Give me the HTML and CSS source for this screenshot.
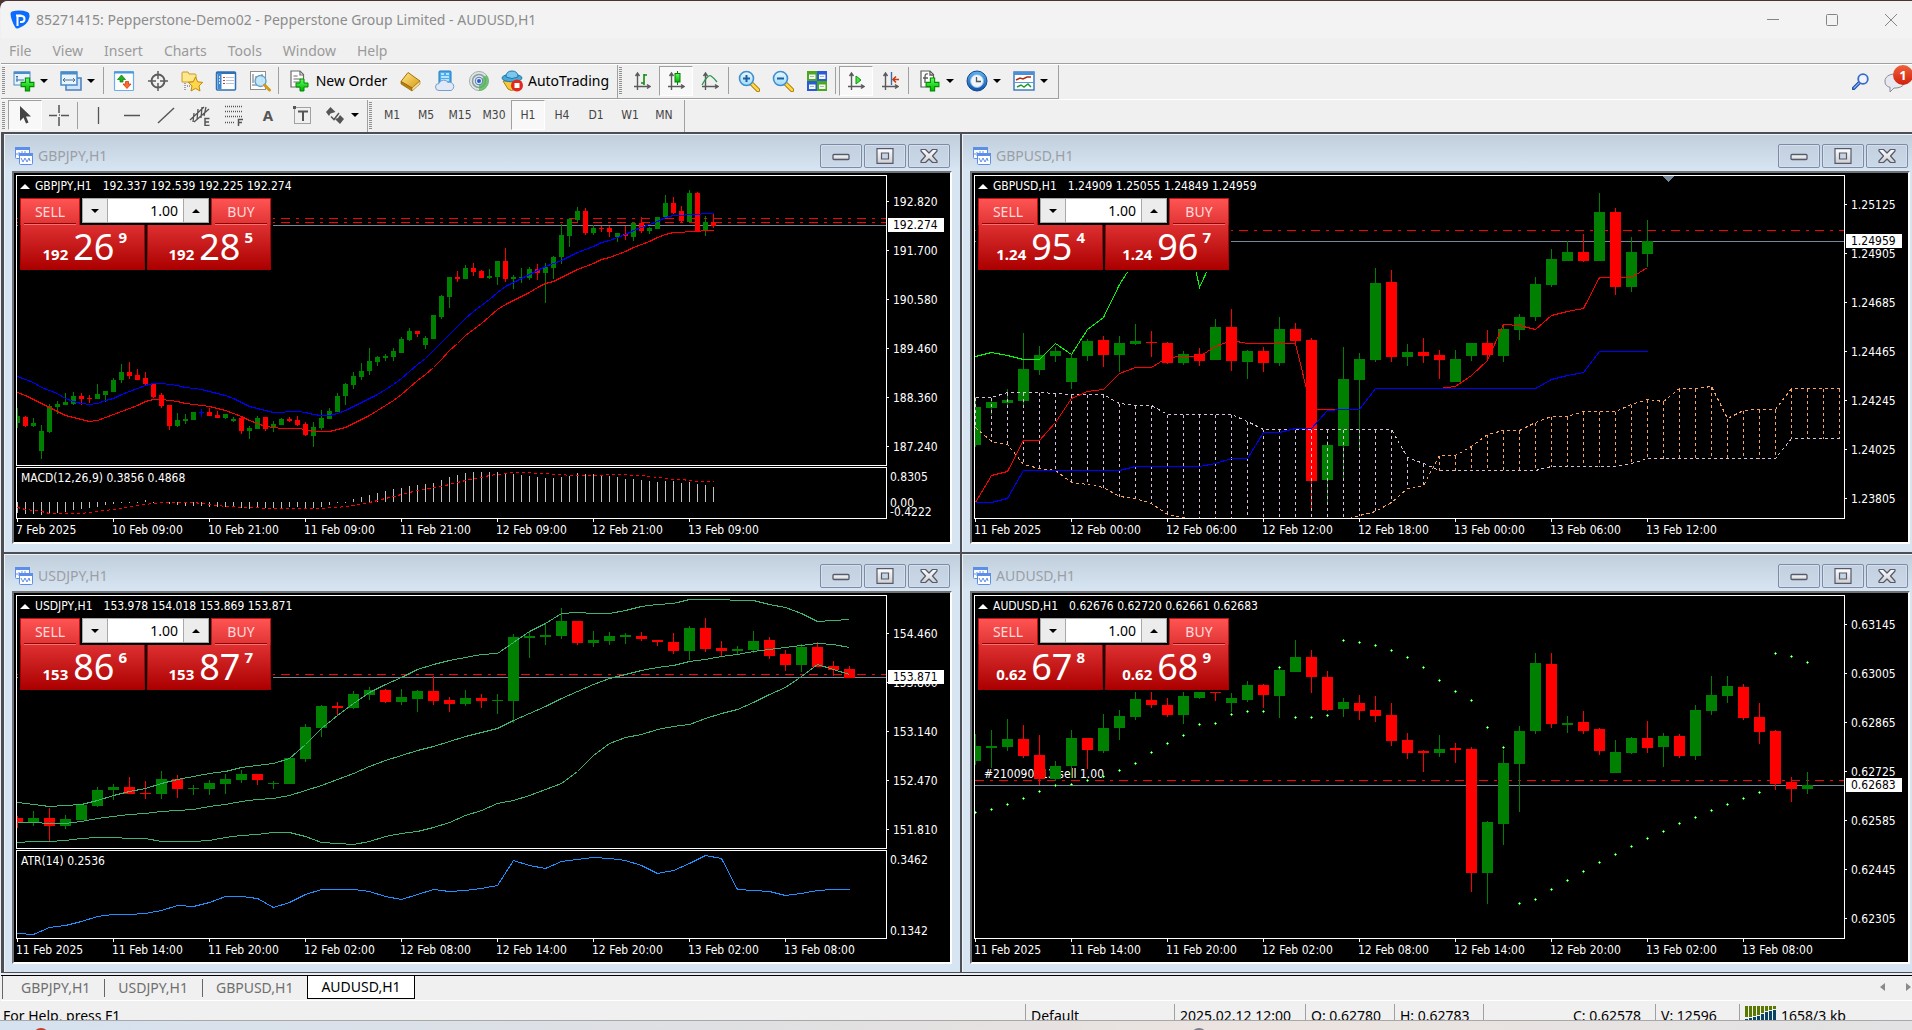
FILE: index.html
```html
<!DOCTYPE html>
<html lang="en">
<head>
<meta charset="utf-8">
<title>85271415: Pepperstone-Demo02 - Pepperstone Group Limited - AUDUSD,H1</title>
<link rel="stylesheet" href="styles.css">
</head>
<body>
<svg class="defs" width="0" height="0" aria-hidden="true">
  <defs>
    <linearGradient id="g-green" x1="0" y1="0" x2="0" y2="1"><stop offset="0" stop-color="#5dff5d"/><stop offset="1" stop-color="#00b400"/></linearGradient>
    <linearGradient id="g-gold" x1="0" y1="0" x2="1" y2="1"><stop offset="0" stop-color="#ffe98a"/><stop offset="1" stop-color="#d79a12"/></linearGradient>
    <linearGradient id="g-blue" x1="0" y1="0" x2="0" y2="1"><stop offset="0" stop-color="#5fb4f0"/><stop offset="1" stop-color="#0f4fa8"/></linearGradient>
    <linearGradient id="g-lens" x1="0" y1="0" x2="0" y2="1"><stop offset="0" stop-color="#eaf8ff"/><stop offset="1" stop-color="#9fdcf7"/></linearGradient>
    <linearGradient id="g-glyph" x1="0" y1="0" x2="0" y2="1"><stop offset="0" stop-color="#ffffff"/><stop offset="1" stop-color="#cfcfcf"/></linearGradient>
    <symbol id="chartwin" viewBox="0 0 18 18">
      <rect x="0.5" y="0.5" width="14" height="11" rx="1" fill="#fff" stroke="#5d8fe8"/><rect x="0" y="0" width="15" height="3" fill="#5d8fe8"/>
      <path d="M2 8V6M4 9V5M7 7V4M10 6V4" stroke="#5d8fe8"/>
      <rect x="4.500" y="6.500" width="13" height="11" rx="1" fill="#fff" stroke="#5d8fe8"/><rect x="4" y="6" width="14" height="3" fill="#5d8fe8"/>
      <path d="M6 11l2 4 2-4 2 4 2-4 1 3" fill="none" stroke="#5d8fe8"/>
    </symbol>
    <symbol id="w-min" viewBox="0 0 18 16"><rect x="1" y="6.500" width="16" height="5" rx="1" fill="url(#g-glyph)" stroke="#55596c" stroke-width="1.300"/></symbol>
    <symbol id="w-max" viewBox="0 0 18 16"><path d="M1 .7h16v14.600H1zM5.500 5v6h7V5z" fill="url(#g-glyph)" fill-rule="evenodd" stroke="#55596c" stroke-width="1.200"/></symbol>
    <symbol id="w-close" viewBox="0 0 18 16"><path d="M1 1.500h4.500L9 5l3.500-3.500H17V3l-4.500 5 4.500 5v1.500h-4.500L9 11l-3.500 3.500H1V13l4.500-5L1 3z" fill="url(#g-glyph)" stroke="#55596c" stroke-width="1.200" stroke-linejoin="round"/></symbol>
    <symbol id="axes" viewBox="0 0 18 20"><path d="M4.500 3v16M1 15.500h15M2.500 5l2-3 2 3M14 13.500l3 2-3 2" fill="none" stroke="#5a5a5a" stroke-width="1.400"/></symbol>
    <symbol id="lens" viewBox="0 0 22 22"><path d="M13 13l7 7" stroke="#a87400" stroke-width="4.500" stroke-linecap="round"/><path d="M13.500 13.500l6.500 6.500" stroke="#ffd84a" stroke-width="2.500" stroke-linecap="round"/><circle cx="8.500" cy="8.500" r="7" fill="url(#g-lens)" stroke="#3f8fd0" stroke-width="1.600"/></symbol>
    <symbol id="plus" viewBox="0 0 14 14"><path d="M5 1h4v4h4v4H9v4H5V9H1V5h4z" fill="url(#g-green)" stroke="#008a00"/></symbol>
  </defs>
</svg>

<div class="app">
  <header class="titlebar">
    <svg class="logo" viewBox="0 0 20 19" aria-hidden="true"><path d="M2 1.500Q10-.5 17.500 2 20 3 19.500 7 18 15 8 18.500q-2 .5-3-1.500Q1 10 .5 4 .5 2 2 1.500z" fill="#0a6cff"/><path d="M7.500 16V6h4a3 3 0 0 1 0 6H10" fill="none" stroke="#fff" stroke-width="2"/><path d="M6 5.500h5.500" stroke="#fff" stroke-width="2"/></svg>
    <h1>85271415: Pepperstone-Demo02 - Pepperstone Group Limited - AUDUSD,H1</h1>
    <div class="sysbuttons">
      <button aria-label="Minimize"><svg viewBox="0 0 12 12"><path d="M0 5.500h12"/></svg></button>
      <button aria-label="Maximize"><svg viewBox="0 0 12 12"><rect x=".5" y=".5" width="11" height="11" rx="1"/></svg></button>
      <button aria-label="Close"><svg viewBox="0 0 12 12"><path d="M0 0l12 12M12 0L0 12"/></svg></button>
    </div>
  </header>

  <nav class="menubar" aria-label="Main menu">
    <button>File</button><button>View</button><button>Insert</button><button>Charts</button><button>Tools</button><button>Window</button><button>Help</button>
  </nav>

  <div class="toolrow">
    <div class="toolbar">
      <i class="grip"></i>
      <button class="drop" aria-label="New chart"><svg viewBox="0 0 22 22"><rect x="1" y="2" width="16" height="13" fill="#e8f3fc" stroke="#4a8cc8"/><rect x="1" y="1.500" width="16" height="2.500" fill="#4a8cc8"/><path d="M4 6v6M3 10h8M4 6l-1 1M4 6l1 1" stroke="#3a6ea8" fill="none"/><use href="#plus" x="7" y="7" width="15" height="15"/></svg></button>
      <button class="drop" aria-label="Profiles"><svg viewBox="0 0 22 22"><rect x="6" y="8" width="15" height="12" fill="#cfe4f8" stroke="#4a7fb8" stroke-width="1.500"/><rect x="1" y="2" width="16" height="13" fill="#eaf4fd" stroke="#4a8cc8" stroke-width="1.500"/><path d="M1 3h16" stroke="#4a8cc8" stroke-width="3"/><path d="M3 10h12M5 8l-2 2 2 2M13 8l2 2-2 2" fill="none" stroke="#4a7090"/></svg></button>
      <i class="sep"></i>
      <button aria-label="Market watch"><svg viewBox="0 0 22 22"><rect x="1.500" y="1.500" width="19" height="19" rx="1" fill="#fdfdfd" stroke="#6aaeea" stroke-width="1.200"/><path d="M1 2.500h20" stroke="#4a9ae0" stroke-width="2"/><path d="M8.500 5l4 4.500H10V12H7V9.500H4.500z" fill="#22b022" stroke="#0a7a0a" stroke-width=".7"/><path d="M14 18.500L10 14h2.500v-2.500h3V14H18z" fill="#ff6a2a" stroke="#c03000" stroke-width=".7"/></svg></button>
      <button aria-label="Data window"><svg viewBox="0 0 22 22"><circle cx="11" cy="11" r="6.500" fill="none" stroke="#5c5c5c" stroke-width="2"/><path d="M11 1v8M11 13v8M1 11h8M13 11h8" stroke="#5c5c5c" stroke-width="1.500"/></svg></button>
      <button aria-label="Navigator"><svg viewBox="0 0 22 22"><path d="M1 3q0-1 1-1h5l1 2h6q1 0 1 1v7H1z" fill="#ffe78c" stroke="#c79a2a"/><path d="M4 13v7M6 16h4" stroke="#555" stroke-dasharray="1 1"/><path d="M14.500 7l2.200 4.800 5 .6-3.700 3.500 1 5.100-4.500-2.600L10 21l1-5.100-3.700-3.500 5-.6z" fill="#ffd84a" stroke="#c08a10"/></svg></button>
      <button aria-label="Terminal"><svg viewBox="0 0 22 22"><rect x="1.500" y="2" width="19" height="18" rx="1" fill="#fff" stroke="#2f6fb4" stroke-width="1.500"/><path d="M2 3h18" stroke="#2f6fb4" stroke-width="2"/><path d="M4.500 3v16" stroke="#3f86cc" stroke-width="4"/><path d="M4 7h1M4 10h1M4 13h1" stroke="#fff" stroke-width="1.500"/><path d="M8 7.500h2M8 10.500h2M8 13.500h2" stroke="#c04040"/><path d="M11 7.500h8M11 10.500h8M11 13.500h8" stroke="#b8c4d4"/></svg></button>
      <button aria-label="Strategy tester"><svg viewBox="0 0 22 22"><rect x="1.500" y="1.500" width="15" height="18" fill="#fff" stroke="#8f8f8f"/><path d="M4 4v9M7 6v8M13 4v8M3 15h8" stroke="#6a6a6a"/><circle cx="11.500" cy="11" r="5.500" fill="#bfe4fa" fill-opacity=".9" stroke="#5a9fd0" stroke-width="1.300"/><path d="M15.500 15l5 5" stroke="#d09a1c" stroke-width="3" stroke-linecap="round"/></svg></button>
      <i class="sep"></i>
      <button class="wide"><svg viewBox="0 0 22 22"><path d="M2 1h9l3.500 3.500V17H2z" fill="#fdfdfd" stroke="#6a6a6a" stroke-width="1.200"/><path d="M11 1v4h3.500M4.500 6h4M4.500 9h7M4.500 12h6" fill="none" stroke="#6a6a6a" stroke-width="1.200"/><use href="#plus" x="6" y="8" width="14" height="14"/></svg>New Order</button>
      <button aria-label="MetaEditor"><svg viewBox="0 0 22 22"><path d="M1 11.500L8 2.500l12 8.500-8 7z" fill="url(#g-gold)" stroke="#a8700a"/><path d="M1 11.500V14l11 7v-3z" fill="#b8800e" stroke="#8a5c00" stroke-width=".6"/><path d="M12 18l8-7v3l-8 7z" fill="#f4e0a0" stroke="#a8700a" stroke-width=".6"/></svg></button>
      <button aria-label="VPS hosting"><svg viewBox="0 0 22 22"><rect x="5" y="1" width="12" height="13" rx="1" fill="#48aef0" stroke="#1f78c0"/><path d="M7 4h3M7 7h8M7 10h8M12 4h3" stroke="#dff2ff" stroke-width="1.500"/><path d="M5 20.500a3.500 3.500 0 0 1 0-7 5 5 0 0 1 9-1 4 4 0 0 1 3 8z" fill="#dfe9f8" stroke="#7a9cc8"/></svg></button>
      <button aria-label="Signals"><svg viewBox="0 0 22 22"><circle cx="11" cy="11" r="9.500" fill="#dfe6e6" stroke="#9cacac"/><circle cx="11" cy="11" r="6.500" fill="none" stroke="#8c9c9c" stroke-width="1.500"/><path d="M11 11v10a10 10 0 0 0 7.500-16z" fill="#4cb84c" fill-opacity=".75"/><circle cx="11" cy="11" r="3.800" fill="#dce8f8" stroke="#5a7ab0"/><circle cx="11" cy="11" r="2" fill="#2a5ac8"/></svg></button>
      <button class="wide auto"><svg viewBox="0 0 22 22"><path d="M2 11h17l-4 8q-5 3-8 0z" fill="#f5c83c" stroke="#b07a10"/><ellipse cx="11" cy="8" rx="10" ry="3.800" fill="#4aa8d8" stroke="#2078a8"/><path d="M5 7q0-6 6-6t6 6q-6 3-12 0z" fill="#7cc8ec" stroke="#2078a8"/><circle cx="16" cy="15.500" r="6" fill="#e0281c"/><rect x="13.500" y="13" width="5" height="5" fill="#fff"/></svg>AutoTrading</button>
    </div>
    <div class="toolbar">
      <i class="grip"></i>
      <button aria-label="Bar chart"><svg viewBox="0 0 22 22"><use href="#axes" x="2" y="1" width="18" height="20"/><path d="M13 4v11M13 5h3M10 13h3" stroke="#108a10" stroke-width="1.600"/></svg></button>
      <button class="pressed" aria-label="Candlesticks"><svg viewBox="0 0 22 22"><use href="#axes" x="2" y="1" width="18" height="20"/><path d="M12.500 1v14" stroke="#0a7a0a"/><rect x="10" y="3.500" width="5" height="8.500" fill="url(#g-green)" stroke="#0a7a0a"/></svg></button>
      <button aria-label="Line chart"><svg viewBox="0 0 22 22"><use href="#axes" x="2" y="1" width="18" height="20"/><path d="M3 15q6-11 9-9t6 6" fill="none" stroke="#2a9a4a" stroke-width="1.300"/></svg></button>
      <i class="sep"></i>
      <button aria-label="Zoom in"><svg viewBox="0 0 22 22"><use href="#lens" width="22" height="22"/><path d="M5 8.500h7M8.500 5v7" stroke="#1f5f9f" stroke-width="2"/></svg></button>
      <button aria-label="Zoom out"><svg viewBox="0 0 22 22"><use href="#lens" width="22" height="22"/><path d="M5 8.500h7" stroke="#1f5f9f" stroke-width="2"/></svg></button>
      <button aria-label="Tile windows"><svg viewBox="0 0 22 22"><path d="M1 1h10v10H1zM11 11h10v10H11z" fill="#4aa81c"/><path d="M11 1h10v10H11zM1 11h10v10H1z" fill="#2a5ad8"/><path d="M3 4.500h6.500V9H3zM13 4.500h6.500V9H13zM3 14.500h6.500V19H3zM13 14.500h6.500V19H13z" fill="#f4f8f4"/><path d="M4 6.500h4M14 6.500h4M4 16.500h4M14 16.500h4" stroke="#a8b8c8"/></svg></button>
      <i class="sep"></i>
      <button class="pressed" aria-label="Auto scroll"><svg viewBox="0 0 22 22"><use href="#axes" x="2" y="1" width="18" height="20"/><path d="M11 6l5 4-5 4z" fill="#4be04b" stroke="#0a9a0a"/></svg></button>
      <button aria-label="Chart shift"><svg viewBox="0 0 22 22"><use href="#axes" x="2" y="1" width="18" height="20"/><path d="M12.500 2v13" stroke="#3a6ea8" stroke-width="1.400"/><path d="M20 9.500h-6M17 6.500l-3 3 3 3" fill="none" stroke="#c83a10" stroke-width="1.600"/></svg></button>
      <i class="sep"></i>
      <button class="drop" aria-label="Indicators"><svg viewBox="0 0 22 22"><path d="M2 1h9l3.500 3.500V17H2z" fill="#fdfdfd" stroke="#5a5a5a" stroke-width="1.200"/><path d="M9 4q-3-1-3 3v6M4 8h5M11 1v4h3.500" fill="none" stroke="#5a5a5a" stroke-width="1.300"/><use href="#plus" x="6" y="7" width="15" height="15"/></svg></button>
      <button class="drop" aria-label="Periods"><svg viewBox="0 0 22 22"><circle cx="11" cy="11" r="10" fill="url(#g-blue)" stroke="#0f4a94"/><circle cx="11" cy="11" r="6.500" fill="#f0f6fc" stroke="#8ab8e0"/><path d="M10.500 7v4.500H15" fill="none" stroke="#555" stroke-width="1.300"/></svg></button>
      <button class="drop" aria-label="Templates"><svg viewBox="0 0 22 22"><rect x="1" y="2" width="20" height="18" fill="#fff" stroke="#3f7cc0" stroke-width="1.500"/><path d="M1 3.500h20" stroke="#4a90d8" stroke-width="3"/><path d="M1 12.500h20" stroke="#5a9ad8"/><path d="M3 10l4-2 3 1 4-2 4 0" fill="none" stroke="#b02a10" stroke-width="1.500"/><path d="M4 17l4-2 3 2 4-3 3 3" fill="none" stroke="#1f9a2a" stroke-width="1.500"/></svg></button>
    </div>
    <div class="toolend">
      <button aria-label="Search"><svg viewBox="0 0 17 17"><path d="M8.500 8.500l-7 7" stroke="#1f4fa8" stroke-width="3.600" stroke-linecap="round"/><path d="M7 10l-5 5" stroke="#8ab4f0" stroke-width="1.300" stroke-linecap="round"/><circle cx="11" cy="6" r="4.800" fill="#eef4fd" stroke="#3a6cc8" stroke-width="1.800"/></svg></button>
      <button class="chat" aria-label="Messages, 1 new"><svg viewBox="0 0 24 22"><path d="M12 4c6 0 10 3 10 7s-4 7-10 7l-1 0-4 4v-4.800C3 16.500 2 14 2 11c0-4 4-7 10-7z" fill="#e8e8f0" stroke="#8a8a94"/></svg><span class="badge">1</span></button>
    </div>
  </div>

  <div class="toolrow second">
    <div class="toolbar">
      <i class="grip"></i>
      <button class="pressed" aria-label="Cursor"><svg viewBox="0 0 22 22"><path d="M6 2v15l3.500-3.500L12 19.500l2.500-1-2.500-6H17z" fill="#444"/></svg></button>
      <button aria-label="Crosshair"><svg viewBox="0 0 22 22"><path d="M11 1v8M11 13v9M1 11.500h8M13 11.500h8M11 11h1" stroke="#555" stroke-width="1.500"/></svg></button>
      <i class="sep"></i>
      <button aria-label="Vertical line"><svg viewBox="0 0 22 22"><path d="M11.500 3v17" stroke="#555" stroke-width="1.300"/></svg></button>
      <button aria-label="Horizontal line"><svg viewBox="0 0 22 22"><path d="M3 11.500h16" stroke="#555" stroke-width="1.300"/></svg></button>
      <button aria-label="Trendline"><svg viewBox="0 0 22 22"><path d="M3 19L19 4" stroke="#555" stroke-width="1.400"/></svg></button>
      <button aria-label="Equidistant channel"><svg viewBox="0 0 22 22"><path d="M1 16L15 3M5 18L20 5M5 9l-1 9M9 5L8 16M13 3l-1 11M17 3l-2 9" stroke="#555" stroke-width="1.300"/><path d="M20.500 14.500H16v7h4.500M16 18h4" fill="none" stroke="#555" stroke-width="1.500"/></svg></button>
      <button aria-label="Fibonacci retracement"><svg viewBox="0 0 22 22"><path d="M2 2.500h18M2 7.500h18M2 12.500h18M2 18.500h10" stroke="#555" stroke-width="1.300" stroke-dasharray="1 1"/><path d="M20 15.500h-4.500V22M15.500 18.500H19" fill="none" stroke="#555" stroke-width="1.500"/></svg></button>
      <button class="letter" aria-label="Text">A</button>
      <button aria-label="Text label"><svg viewBox="0 0 22 22"><rect x="3.500" y="3.500" width="16" height="16" fill="none" stroke="#555" stroke-dasharray="1 1"/><path d="M2 2h3v3H2z" fill="#555"/><path d="M7 7.500h10M12 7v10" stroke="#555" stroke-width="2"/></svg></button>
      <button class="drop" aria-label="Arrows"><svg viewBox="0 0 22 22"><path d="M6.500 3l5 5-5 1.500L5 12 2 8zM16 20l-5-5 3-1 2-3 4 4z" fill="#555"/><path d="M7 12.500l3 3L15 9" fill="none" stroke="#555" stroke-width="1.500"/></svg></button>
    </div>
    <div class="toolbar frames">
      <i class="grip"></i>
      <button>M1</button><button>M5</button><button>M15</button><button>M30</button><button class="pressed">H1</button><button>H4</button><button>D1</button><button>W1</button><button>MN</button>
    </div>
  </div>

  <main class="mdi">
    <section class="win">
      <header class="wintitle"><svg class="winicon"><use href="#chartwin"/></svg><h2>GBPJPY,H1</h2>
        <button aria-label="Minimize"><svg><use href="#w-min"/></svg></button><button aria-label="Maximize"><svg><use href="#w-max"/></svg></button><button aria-label="Close"><svg><use href="#w-close"/></svg></button></header>
      <div class="client">
        <div class="panels">
          <div class="panel"><svg class="plot" data-chart="gbpjpy"></svg>
            <p class="ohlc"><i class="up"></i><span>GBPJPY,H1</span><span>192.337 192.539 192.225 192.274</span></p>
            <form class="trade"><button type="button" class="side">SELL</button><div class="lots"><button type="button" aria-label="Less"><i class="down"></i></button><input aria-label="Volume" value="1.00"><button type="button" aria-label="More"><i class="up"></i></button></div><button type="button" class="side">BUY</button>
              <button type="button" class="quote"><b>192</b><span>26</span><sup>9</sup></button><button type="button" class="quote"><b>192</b><span>28</span><sup>5</sup></button></form>
          </div>
          <div class="panel sub macd"><svg class="plot" data-chart="macd"></svg><p class="name">MACD(12,26,9) 0.3856 0.4868</p></div>
        </div>
        <div class="scale">
          <ul class="prices from-2"><li>192.820</li><li>191.700</li><li>190.580</li><li>189.460</li><li>188.360</li><li>187.240</li></ul>
          <span class="tag" style="top:43px">192.274</span>
          <div class="subscale macd"><span>0.8305</span><span>0.00</span><span>-0.4222</span></div>
        </div>
        <ul class="dates"><li>7 Feb 2025</li><li>10 Feb 09:00</li><li>10 Feb 21:00</li><li>11 Feb 09:00</li><li>11 Feb 21:00</li><li>12 Feb 09:00</li><li>12 Feb 21:00</li><li>13 Feb 09:00</li></ul>
      </div>
    </section>

    <section class="win">
      <header class="wintitle"><svg class="winicon"><use href="#chartwin"/></svg><h2>GBPUSD,H1</h2>
        <button aria-label="Minimize"><svg><use href="#w-min"/></svg></button><button aria-label="Maximize"><svg><use href="#w-max"/></svg></button><button aria-label="Close"><svg><use href="#w-close"/></svg></button></header>
      <div class="client">
        <div class="panels">
          <div class="panel"><svg class="plot" data-chart="gbpusd"></svg>
            <p class="ohlc"><i class="up"></i><span>GBPUSD,H1</span><span>1.24909 1.25055 1.24849 1.24959</span></p>
            <form class="trade"><button type="button" class="side">SELL</button><div class="lots"><button type="button" aria-label="Less"><i class="down"></i></button><input aria-label="Volume" value="1.00"><button type="button" aria-label="More"><i class="up"></i></button></div><button type="button" class="side">BUY</button>
              <button type="button" class="quote"><b>1.24</b><span>95</span><sup>4</sup></button><button type="button" class="quote"><b>1.24</b><span>96</span><sup>7</sup></button></form>
          </div>
        </div>
        <div class="scale">
          <ul class="prices from-5"><li>1.25125</li><li>1.24905</li><li>1.24685</li><li>1.24465</li><li>1.24245</li><li>1.24025</li><li>1.23805</li></ul>
          <span class="tag" style="top:59px">1.24959</span>
        </div>
        <ul class="dates"><li>11 Feb 2025</li><li>12 Feb 00:00</li><li>12 Feb 06:00</li><li>12 Feb 12:00</li><li>12 Feb 18:00</li><li>13 Feb 00:00</li><li>13 Feb 06:00</li><li>13 Feb 12:00</li></ul>
      </div>
    </section>

    <section class="win">
      <header class="wintitle"><svg class="winicon"><use href="#chartwin"/></svg><h2>USDJPY,H1</h2>
        <button aria-label="Minimize"><svg><use href="#w-min"/></svg></button><button aria-label="Maximize"><svg><use href="#w-max"/></svg></button><button aria-label="Close"><svg><use href="#w-close"/></svg></button></header>
      <div class="client">
        <div class="panels">
          <div class="panel"><svg class="plot" data-chart="usdjpy"></svg>
            <p class="ohlc"><i class="up"></i><span>USDJPY,H1</span><span>153.978 154.018 153.869 153.871</span></p>
            <form class="trade"><button type="button" class="side">SELL</button><div class="lots"><button type="button" aria-label="Less"><i class="down"></i></button><input aria-label="Volume" value="1.00"><button type="button" aria-label="More"><i class="up"></i></button></div><button type="button" class="side">BUY</button>
              <button type="button" class="quote"><b>153</b><span>86</span><sup>6</sup></button><button type="button" class="quote"><b>153</b><span>87</span><sup>7</sup></button></form>
          </div>
          <div class="panel sub atr"><svg class="plot" data-chart="atr"></svg><p class="name">ATR(14) 0.2536</p></div>
        </div>
        <div class="scale">
          <ul class="prices from-14"><li>154.460</li><li>153.800</li><li>153.140</li><li>152.470</li><li>151.810</li></ul>
          <span class="tag" style="top:75px">153.871</span>
          <div class="subscale atr"><span>0.3462</span><span>0.1342</span></div>
        </div>
        <ul class="dates"><li>11 Feb 2025</li><li>11 Feb 14:00</li><li>11 Feb 20:00</li><li>12 Feb 02:00</li><li>12 Feb 08:00</li><li>12 Feb 14:00</li><li>12 Feb 20:00</li><li>13 Feb 02:00</li><li>13 Feb 08:00</li></ul>
      </div>
    </section>

    <section class="win">
      <header class="wintitle"><svg class="winicon"><use href="#chartwin"/></svg><h2>AUDUSD,H1</h2>
        <button aria-label="Minimize"><svg><use href="#w-min"/></svg></button><button aria-label="Maximize"><svg><use href="#w-max"/></svg></button><button aria-label="Close"><svg><use href="#w-close"/></svg></button></header>
      <div class="client">
        <div class="panels">
          <div class="panel"><svg class="plot" data-chart="audusd"></svg>
            <p class="ohlc"><i class="up"></i><span>AUDUSD,H1</span><span>0.62676 0.62720 0.62661 0.62683</span></p>
            <form class="trade"><button type="button" class="side">SELL</button><div class="lots"><button type="button" aria-label="Less"><i class="down"></i></button><input aria-label="Volume" value="1.00"><button type="button" aria-label="More"><i class="up"></i></button></div><button type="button" class="side">BUY</button>
              <button type="button" class="quote"><b>0.62</b><span>67</span><sup>8</sup></button><button type="button" class="quote"><b>0.62</b><span>68</span><sup>9</sup></button></form>
          </div>
        </div>
        <div class="scale">
          <ul class="prices from-5"><li>0.63145</li><li>0.63005</li><li>0.62865</li><li>0.62725</li><li>0.62585</li><li>0.62445</li><li>0.62305</li></ul>
          <span class="tag" style="top:183px">0.62683</span>
        </div>
        <ul class="dates"><li>11 Feb 2025</li><li>11 Feb 14:00</li><li>11 Feb 20:00</li><li>12 Feb 02:00</li><li>12 Feb 08:00</li><li>12 Feb 14:00</li><li>12 Feb 20:00</li><li>13 Feb 02:00</li><li>13 Feb 08:00</li></ul>
      </div>
    </section>
  </main>

  <nav class="tabs" aria-label="Charts">
    <button>GBPJPY,H1</button><button>USDJPY,H1</button><button>GBPUSD,H1</button><button class="active">AUDUSD,H1</button>
    <span class="tabscroll"><i class="left"></i><i class="right"></i></span>
  </nav>

  <footer class="status">
    <span class="help">For Help, press F1</span>
    <span class="c-profile">Default</span>
    <span class="c-time">2025.02.12 12:00</span>
    <span class="c-price">O: 0.62780</span>
    <span class="c-price">H: 0.62783</span>
    <span class="c-close">C: 0.62578</span>
    <span class="c-volume">V: 12596</span>
    <span class="c-net"><svg viewBox="0 0 32 16" aria-hidden="true"><path d="M0 0h3v11H0zM4 0h3v11H4zM8 0h3v10H8zM12 0h3v9h-3zM16 0h3v7h-3zM20 0h3v5h-3zM24 0h3v4h-3zM28 0h3v3h-3z" fill="#5a7800"/><path d="M0 13h3v3H0zM4 12h3v4H4zM8 11h3v5H8zM12 10h3v6h-3zM16 8h3v8h-3zM20 6h3v10h-3zM24 5h3v11h-3zM28 4h3v12h-3z" fill="#0a4464"/></svg>1658/3 kb</span>
  </footer>
</div>
<div class="taskbar"><i class="dot red"></i><i class="dot gray"></i></div>
<script src="charts.js"></script>
</body>
</html>
```
FILE: styles.css
```css
* { box-sizing: border-box; }
body, h1, h2, p, ul, form { margin: 0; padding: 0; font-weight: normal; }
ul { list-style: none; }
body {
  display: flex;
  flex-direction: column;
  height: 100vh;
  overflow: hidden;
  background: #4c3434;
  font: 14px/20px "Noto Sans", "Open Sans", sans-serif;
  color: #000;
}
button, input { font: inherit; color: inherit; margin: 0; padding: 0; border: 0; background: none; }
.defs { position: absolute; }

.app {
  flex: 1;
  min-height: 0;
  display: flex;
  flex-direction: column;
  margin-top: 1px;
  padding-left: 1px;
  background: #f0f0f0;
  border-top-left-radius: 8px;
  overflow: hidden;
}

/* title bar and menu */
.titlebar { display: flex; align-items: center; height: 37px; padding-left: 9px; background: #f3f3f3; color: #8c8c8c; }
.logo { width: 20px; height: 19px; margin-right: 6px; }
h1 { flex: 1; font-size: 14px; }
.sysbuttons { display: flex; gap: 17px; }
.sysbuttons button { width: 42px; height: 36px; display: grid; place-items: center; }
.sysbuttons svg { width: 12px; height: 12px; fill: none; stroke: #858585; stroke-width: 1; overflow: visible; }
.menubar { display: flex; gap: 21px; height: 26px; padding-left: 8px; border-bottom: 1px solid #a0a0a0; color: #9a9a9a; }

/* toolbars */
.toolrow { display: flex; height: 35px; border-top: 1px solid #fff; }
.toolrow.second { height: 33px; }
.toolbar { display: flex; align-items: center; padding: 0 3px 2px 1px; border-right: 1px solid #a0a0a0; border-bottom: 1px solid #a0a0a0; }
.second .toolbar { border-bottom: 0; }
.toolbar svg { width: 22px; height: 22px; flex: none; }
.toolbar button { display: flex; align-items: center; justify-content: center; width: 34px; height: 30px; }
.toolbar button.drop { width: 47px; justify-content: flex-start; padding-left: 5px; gap: 5px; }
.toolbar button.drop::after { content: ""; border: 4px solid transparent; border-top-color: #000; border-bottom: 0; }
.toolbar button.wide { width: 112px; gap: 5px; }
.toolbar button.auto { width: 118px; }
.toolbar button.pressed { border: 1px solid; border-color: #a0a0a0 #fff #fff #a0a0a0; background: #f8f8f8; }
.toolbar button.letter { font: bold 15px/20px "Noto Sans", sans-serif; color: #555; }
.toolbar .sep + .drop { margin-left: 2px; }
.grip { width: 3px; height: 27px; margin: 0 3px 0 0; background: repeating-linear-gradient(#909090 0 1px, #f0f0f0 1px 2px); }
.sep { width: 1px; height: 27px; margin: 0 3px 0 1px; background: #a0a0a0; }
.second .toolbar button.drop { width: 45px; }
.frames button { font: 12px/16px "DejaVu Sans Condensed", "Noto Sans", sans-serif; color: #444; }
.toolend { display: flex; align-items: center; gap: 14px; margin-left: auto; padding-bottom: 2px; }
.toolend svg { display: block; width: 17px; height: 17px; }
.toolend .chat { position: relative; width: 29px; height: 22px; }
.toolend .chat svg { width: 24px; height: 22px; }
.badge { position: absolute; right: -1px; top: -5px; width: 20px; height: 20px; border-radius: 50%; background: linear-gradient(#f0603c, #d0200c); color: #fff; font: bold 13px/20px "Noto Sans", sans-serif; text-align: center; }

/* chart windows */
.mdi { flex: 1; min-height: 0; display: grid; grid-template: minmax(0, 1fr) minmax(0, 1fr) / 1fr 1fr; column-gap: 1px; padding: 0 0 1px 2px; margin-right: -6px; background: #4c4f55; border-bottom: 2px solid #e8eef4; }
.win { display: flex; flex-direction: column; min-width: 0; min-height: 0; padding: 0 8px 8px 8px; border-top: 2px solid #4c4f55; border-left: 1px solid #4c4f55; background: linear-gradient(#c0cddb, #d7e4f2 36px); box-shadow: inset 1px 1px #eef3f8; }
.wintitle { flex: none; display: flex; align-items: center; gap: 2px; height: 37px; padding: 6px 2px 0 3px; }
.winicon { width: 18px; height: 18px; margin-right: 3px; }
h2 { flex: 1; font-size: 14px; color: #9a9fa6; }
.wintitle button { width: 42px; height: 24px; display: grid; place-items: center; border: 1px solid #7d8ba9; border-radius: 2px; background: linear-gradient(#c3d0df, #cbd8e7); box-shadow: inset 0 0 0 1px #d5dfec; }
.wintitle button svg { width: 18px; height: 16px; }
.client { flex: 1; min-height: 0; display: grid; grid-template: minmax(0, 1fr) 23px / 1fr 63px; padding: 2px 0 0 2px; border: 2px solid; border-color: #6f7378 #fff #fff #6f7378; background: #000; color: #fff; font: 12px/14px "DejaVu Sans Condensed", "Noto Sans", sans-serif; }
.panels { display: flex; flex-direction: column; gap: 1px; min-width: 0; min-height: 0; }
.panel { position: relative; flex: 1; min-height: 0; border: 1px solid #fff; overflow: hidden; }
.panel.sub { flex: none; }
.panel.macd { height: 52px; }
.panel.atr { height: 89px; }
.plot { position: absolute; left: 0; top: 0; width: 100%; height: 100%; shape-rendering: crispEdges; }
.ohlc, .name { position: relative; display: flex; padding: 3px 0 0 3px; white-space: pre; }
.ohlc { gap: 11px; align-items: center; }
.ohlc .up { margin-right: -6px; }
.name { padding: 3px 0 0 4px; }
.up, .down { width: 0; height: 0; border: 5px solid transparent; }
.up { border-top: 0; border-bottom-color: #fff; }
.down { border-bottom: 0; border-top-color: #000; }

.scale { position: relative; min-height: 0; display: flex; flex-direction: column; }
.prices { flex: 1; min-height: 0; }
.prices li { display: flex; align-items: center; gap: 4px; height: 49px; }
.prices li::before { content: ""; width: 2px; height: 1px; background: #fff; }
.from-2 { padding-top: 2px; }
.from-5 { padding-top: 5px; }
.from-14 { padding-top: 14px; }
.tag { position: absolute; left: 1px; width: 56px; padding-left: 5px; background: #fff; color: #000; }
.subscale { position: relative; display: flex; flex-direction: column; justify-content: space-between; padding: 3px 0 1px 3px; }
.subscale.macd { height: 52px; padding-bottom: 0; }
.subscale.macd span:nth-child(2) { margin: 5px 0 -12px; }
.subscale.atr { height: 89px; }
.dates { grid-column: 1 / 3; display: flex; overflow: hidden; }
.dates li { flex: none; width: 96px; white-space: nowrap; }
.dates li::before { content: ""; display: block; width: 1px; height: 3px; margin: 0 0 1px 1px; background: #fff; }

/* one-click trading panel */
.trade { position: absolute; left: 1px; top: 20px; width: 255px; display: grid; grid-template-columns: 60px 65px 2px 64px 60px; padding: 2px; background: #000; color: #ffe4e4; }
.trade .side { position: relative; height: 27px; font: 14px/20px "Noto Sans", sans-serif; border: 1px solid #c01010; border-bottom: 0; background: linear-gradient(#ff5454, #e03434); color: #ffdcdc; }
.trade .side::after { content: ""; position: absolute; left: 3px; right: 3px; bottom: 0; height: 2px; background: linear-gradient(#8c0000 50%, #ff7070 50%); }
.lots { grid-column: span 3; display: flex; height: 25px; border: 1px solid #a8a8a8; margin: 0 2px; background: #fff; color: #000; }
.lots button { width: 24px; display: grid; place-items: center; background: #ececec; }
.lots input { flex: 1; min-width: 0; width: 0; padding-right: 5px; border: solid #a8a8a8; border-width: 0 1px; text-align: right; font: 14px/20px "Noto Sans", sans-serif; }
.lots .up { border: 4px solid transparent; border-top: 0; border-bottom-color: #000; }
.lots .down { border: 4px solid transparent; border-bottom: 0; border-top-color: #000; }
.trade .quote { grid-column: span 2; height: 45px; display: flex; justify-content: flex-end; align-items: baseline; padding-right: 17px; background: linear-gradient(#de3030, #ac0000); border: 1px solid #a80000; border-top: 0; color: #fff; overflow: hidden; }
.trade .quote:last-child { grid-column: 4 / 6; }
.quote b { font: bold 15px/44px "Noto Sans", sans-serif; }
.quote span { font: 36px/44px "Noto Sans", sans-serif; margin: 0 4px 0 5px; }
.quote sup { align-self: flex-start; font: bold 15px/20px "Noto Sans", sans-serif; margin-top: 2px; vertical-align: baseline; }

/* chart tabs */
.tabs { display: flex; height: 26px; padding-left: 1px; border-top: 1px solid #000; border-bottom: 1px solid #fff; color: #6f6f6f; }
.tabs button { position: relative; padding: 0 14px; height: 23px; }
.tabs button:first-child { padding-left: 18px; border-left: 1px solid #666; }
.tabs button + button:not(.active)::before { content: ""; position: absolute; left: 0; top: 3px; width: 1px; height: 18px; background: #666; }
.tabs .active { padding: 0 13px; border: 1px solid #000; border-top: 0; background: #fff; color: #000; }
.tabscroll { display: flex; align-items: center; gap: 21px; margin-left: auto; padding: 0 1px 3px 0; }
.tabscroll i { border: 4px solid transparent; }
.tabscroll .left { border-left: 0; border-right: 5px solid #8a8a8a; }
.tabscroll .right { border-right: 0; border-left: 5px solid #8a8a8a; }

/* status bar */
.status { display: flex; height: 19px; overflow: hidden; white-space: nowrap; }
.status span { flex: none; height: 30px; margin-top: 3px; padding: 2px 0 0 5px; border-left: 1px solid #a0a0a0; }
.status .help { flex: 1; padding-left: 2px; border: 0; }
.status .c-profile { width: 149px; }
.status .c-time { width: 131px; }
.status .c-price { width: 89px; }
.status .c-close { width: 172px; padding-right: 14px; text-align: right; }
.status .c-volume { width: 84px; }
.status .c-net { display: flex; gap: 4px; width: 173px; }
.c-net svg { width: 32px; height: 16px; }
.taskbar { position: relative; height: 10px; overflow: hidden; border-top: 1px solid #a8a8a8; background: linear-gradient(90deg, #d6e2f0, #e0e0e2 40%, #ece4e0 66%, #e2e2e4); }
.dot { position: absolute; top: 7px; width: 16px; height: 16px; border-radius: 50%; }
.dot.red { left: 33px; background: #c83c2c; }
.dot.gray { left: 1191px; background: #7c7c90; }
```
FILE: charts.js
```js
// Vertical values are stored in thirds of a pixel, measured from 46px above the main panel.
const SCALE = 3;
const MAIN_TOP = 46;
const up = "#008000", down = "#ff0000";

const repeat = (v, n) => Array(n).fill(v);

const charts = {
  gbpjpy: {
    top: MAIN_TOP, step: 8, body: 5, levels: [["ask", 265], ["ask", 277], ["bid", 286]],
    candles: `g834,858,879,894 r858,861,888,891 g864,879,888,890 g885,903,963,987 g822,828,906,909 g813,822,831,852 g789,816,825,825 g786,798,822,825 r789,798,807,825 r795,804,806,819
      g762,792,806,806 g783,783,795,815 g744,750,786,786 g702,726,750,759 r696,726,738,747 r717,735,750,750 r726,744,762,765 r759,762,801,804 r789,795,828,834 r825,825,888,900
      g849,870,888,891 g852,867,872,882 g846,846,870,870 b837,846,849,861 r834,846,858,858 r843,855,864,864 g852,852,864,867 g861,867,872,876 r858,864,903,912 g888,894,903,927
      g858,864,897,897 r861,861,897,903 g873,882,894,906 g864,867,885,885 r861,867,872,876 r858,870,885,888 r876,882,915,918 g876,891,918,951 g840,864,894,900 g834,843,867,867
      g789,798,846,846 g759,762,798,825 g726,738,765,777 g699,723,741,750 g654,693,723,735 g678,681,696,708 g672,678,684,693 g654,663,681,693 g621,627,669,669 g594,603,630,633
      r603,603,612,621 g618,624,645,657 g555,555,627,627 g495,498,561,567 g441,441,501,534 r423,441,447,456 g405,414,447,447 r399,414,426,438 r420,423,444,444 g417,438,444,447
      g393,393,441,465 r354,393,447,456 g435,441,447,477 g414,441,444,459 g411,417,444,450 r402,417,429,450 g399,411,429,519 g378,381,414,447 g282,315,381,402 g264,267,318,351
      g231,243,270,276 r234,243,309,315 g285,294,309,315 r288,294,297,306 r288,294,306,321 g309,309,321,336 r288,312,318,330 g276,279,321,333 r261,279,303,309 g291,294,303,312
      g261,261,297,297 g195,219,261,264 r201,219,249,252 r228,243,273,279 g180,189,276,276 r186,189,303,303 g258,276,300,318 r249,276,288,294`,
    lines: [
      { color: "#0000ff", y: [740,747,757,771,781,791,804,813,820,824,820,811,804,794,784,775,766,760,760,763,767,772,775,778,784,790,796,805,816,828,835,841,847,847,844,845,848,853,856,855,850,841,829,817,805,792,778,763,744,723,702,684,660,636,612,589,565,545,527,508,488,470,458,446,433,420,409,400,391,379,367,358,348,338,331,323,312,300,291,283,273,262,257,256,254,253,250,250] },
      { color: "#ff0000", y: [787,795,807,821,832,845,856,863,869,874,870,861,853,844,834,825,815,808,808,811,815,820,824,827,830,834,841,849,859,872,881,888,893,895,895,895,899,904,905,905,899,892,880,867,855,842,827,810,793,773,751,733,712,689,661,640,617,597,580,558,537,522,510,499,487,471,461,453,443,431,419,410,399,388,382,373,364,352,344,333,322,313,307,307,304,303,302,301] }
    ]
  },
  macd: {
    top: 338, step: 8, zero: 1115,
    bars: [1150,1152,1152,1155,1153,1150,1145,1140,1137,1134,1131,1125,1122,1118,1118,1118,1110,1118,1115,1122,1126,1128,1127,1128,1131,1131,1131,1132,1134,1137,1134,1134,1134,1134,1131,1131,1134,1134,1131,1125,1119,1115,1107,1102,1096,1090,1084,1077,1074,1069,1066,1062,1059,1050,1041,1035,1030,1026,1026,1026,1026,1032,1032,1035,1038,1041,1044,1044,1041,1038,1029,1032,1032,1038,1038,1041,1047,1047,1050,1053,1056,1053,1053,1059,1057,1062,1065,1071],
    lines: [{ color: "#ff0000", dash: "3 3", y: [1132,1137,1141,1145,1149,1150,1150,1150,1150,1148,1144,1140,1138,1134,1130,1127,1123,1119,1117,1116,1117,1117,1118,1121,1124,1126,1128,1130,1131,1132,1133,...repeat(1134,8),1133,1131,1130,1127,1123,1117,1112,1106,1100,1094,1087,1082,1077,1072,1068,1063,1058,1052,1046,1042,1036,1033,1030,1027,1027,1027,1029,1030,1032,1033,1035,1036,1036,1036,1036,1033,1033,1034,1036,1036,1038,1041,1045,1048,1048,1051,1054,1054,1054] }]
  },
  gbpusd: {
    top: MAIN_TOP, step: 16, body: 11, levels: [["ask", 301], ["bid", 334]], shiftMark: 693,
    candles: `g800,831,945,951 g810,816,834,855 g777,810,819,828 g609,717,813,834 g648,675,720,735 g651,663,678,696 g672,684,756,777 g627,633,678,693 r618,630,675,711 g618,639,675,726
      g582,633,642,645 r603,636,639,681 r636,639,699,702 g663,672,699,705 r654,671,693,708 g567,591,690,690 r537,591,693,723 g660,663,696,747 r651,663,699,726 g561,597,699,708
      r579,597,633,645 r624,630,1053,1143 g933,945,1050,1118 g651,747,948,1050 g669,687,750,954 g414,459,690,696 r420,456,681,696 g642,666,681,708 r624,666,678,699 r660,675,690,747
      g660,687,756,756 g639,639,678,693 r600,639,675,690 g588,597,678,696 g552,561,600,630 g441,462,561,573 g357,387,465,471 g333,366,393,393 r312,366,393,396 g189,246,393,393
      r234,246,471,495 g321,366,471,486 g270,333,372,411`,
    cloud: {
      a: [893,935,943,1003,1015,1021,1056,1063,1072,1098,1105,1120,1153,1162,...repeat(1178,9),1170,1157,1145,1116,1075,1066,977,976,949,913,901,901,877,858,858,844,844,844,824,808,813,775,775,769,865,841,838,838,775,775,775,775],
      b: [802,802,787,787,787,790,793,793,793,820,827,827,...repeat(853,5),875,...repeat(898,9),983,1000,...repeat(1021,7),...repeat(1009,5),1000,...repeat(986,9),925,925,925,925]
    },
    lines: [
      { color: "#00ff00", y: [680,667,676,688,688,641,674,598,562,462,387,366,393,246,471,366,333] },
      { color: "#ff0000", y: [1116,1036,1023,931,931,877,805,785,778,730,712,712,681,679,679,648,632,640,640,640,640,838,838,838,838,...repeat(775,5),768,735,690,583,586,598,556,544,535,442,442,442,411] },
      { color: "#0000ff", y: [1117,1117,1105,...repeat(1021,7),...repeat(1009,5),1000,986,986,907,907,896,896,842,838,838,...repeat(775,11),747,736,727,...repeat(664,4)] }
    ]
  },
  usdjpy: {
    top: MAIN_TOP, step: 16, body: 11, levels: [["ask", 373], ["bid", 382]],
    candles: `r798,804,816,834 g783,804,816,828 r774,804,828,873 g795,807,828,837 g765,765,810,810 g711,720,768,771 g702,711,720,750 r681,711,732,732 r693,729,732,747 g663,687,732,747
      r675,687,717,744 g705,714,717,735 g690,699,717,735 g672,687,702,732 g660,672,690,699 r672,672,690,705 g693,699,702,717 g624,624,702,702 g522,531,627,636 g465,468,534,561
      r456,468,474,495 g423,432,474,477 g411,420,435,450 r417,420,456,459 g417,441,456,465 g420,423,447,486 r378,423,453,465 r441,450,462,486 g420,444,462,468 r432,444,453,474
      g432,450,453,492 g252,261,453,519 g243,258,264,324 g222,255,261,285 g174,213,258,267 r213,213,279,285 g243,270,279,291 g246,258,273,285 g249,255,261,282 r246,258,267,273
      r270,270,276,288 r249,276,303,312 g228,234,303,330 r204,234,297,306 r273,294,303,318 g288,297,303,312 g243,273,300,309 r261,270,318,327 r300,312,345,363 g282,291,345,366
      r276,291,351,351 r333,348,360,378 r348,357,384,384`,
    lines: [
      { color: "#3cb371", y: [757,764,769,766,763,751,735,724,715,699,687,678,671,663,653,646,639,625,583,536,496,459,427,403,382,358,344,332,323,313,310,276,245,219,191,187,190,190,182,169,163,159,149,149,149,151,152,163,172,190,214,211,208] },
      { color: "#3cb371", y: [817,817,821,821,814,805,799,794,790,784,781,778,769,763,755,748,745,737,722,707,688,670,650,631,616,601,589,574,558,547,535,512,490,469,445,424,403,385,374,361,352,345,334,328,319,313,304,298,292,286,280,283,292] },
      { color: "#3cb371", y: [877,874,874,871,865,862,862,865,866,874,874,874,871,862,856,853,847,847,859,877,880,883,874,859,850,843,832,817,797,782,760,751,737,718,700,664,616,581,562,553,538,529,523,505,490,478,457,434,411,379,344,358,373] }
    ]
  },
  atr: {
    top: 301, step: 16,
    lines: [{ color: "#1e90ff", y: [1150,1153,1132,1126,1114,1100,1094,1093,1090,1081,1067,1069,1057,1040,1040,1046,1072,1057,1034,1019,1019,1019,1024,1040,1048,1033,1018,1024,1021,1015,1006,931,946,955,935,928,922,926,931,946,969,961,940,916,925,1018,1021,1024,1036,1030,1021,1018,1018] }]
  },
  audusd: {
    top: MAIN_TOP, step: 16, body: 11, levels: [["ask", 691], ["bid", 706]], order: { text: "#210090313 sell 1.00", y: 684 },
    candles: `g552,588,633,645 g540,588,594,654 g507,567,591,603 r525,567,618,624 r555,615,687,705 g633,648,687,693 g540,564,648,684 r564,564,600,657 g492,534,603,609 g480,498,534,570
      g426,447,501,510 r426,450,465,474 r444,465,495,501 g426,438,495,522 g420,420,444,447 r420,426,430,453 g429,444,459,486 g393,405,450,456 r402,405,435,474 g356,360,438,504
      g270,321,366,366 r300,321,381,430 r363,381,480,483 g444,456,477,501 r435,459,483,510 r438,480,498,516 r459,495,573,588 r549,570,609,627 r600,603,609,666 g555,597,609,621
      r579,594,600,639 r591,597,969,1026 g813,816,969,1062 g600,639,822,885 g528,543,642,786 g309,339,543,552 r309,342,522,534 g498,519,525,549 r483,516,543,552 r534,537,603,615
      g570,606,669,669 g561,564,609,612 r513,564,594,609 g549,558,591,651 r552,558,618,624 g465,480,618,630 g378,435,483,495 g378,408,438,459 r402,411,504,510 r459,501,546,582
      r540,543,702,720 r681,696,717,756 g666,705,717,732`,
    dots: [787,778,763,745,724,706,703,691,679,661,640,607,580,556,523,520,493,484,484,352,502,502,496,271,277,286,301,322,352,391,424,451,532,592,1060,1048,1018,991,964,937,913,889,865,844,820,802,781,763,745,727,310,319,337]
  }
};

function draw(c) {
  const edge = v => Math.round(v / SCALE) - c.top;
  const mid = v => Math.floor(v / SCALE) - c.top + 0.5;
  const out = [];
  const poly = (ys, color, dash) => out.push(
    `<polyline fill="none" stroke="${color}" ${dash ? `stroke-dasharray="${dash}"` : ""} points="${ys.map((y, i) => `${i * c.step + 0.5},${mid(y)}`).join(" ")}"/>`);

  for (const [kind, y] of c.levels || []) {
    const style = kind === "ask" ? `stroke="#ff0000" stroke-dasharray="9 6 3 6"` : `stroke="#778899"`;
    out.push(`<line x1="0" x2="100%" y1="${mid(y)}" y2="${mid(y)}" ${style}/>`);
  }
  if (c.order) out.push(`<text x="9" y="${edge(c.order.y)}" fill="#fff">${c.order.text}</text>`);
  if (c.shiftMark) out.push(`<path d="M${c.shiftMark - 6} 0h12l-6 6z" fill="#778899"/>`);

  (c.candles || "").split(/\s+/).filter(Boolean).forEach((s, i) => {
    const color = { g: up, r: down, b: "#0000ff" }[s[0]];
    const [h, t, b, l] = s.slice(1).split(",").map(Number).map(edge);
    const x = i * c.step;
    out.push(`<rect x="${x}" y="${h}" width="1" height="${Math.max(1, l - h)}" fill="${color}"/>`);
    out.push(`<rect x="${x - (c.body - 1) / 2}" y="${t}" width="${c.body}" height="${Math.max(1, b - t)}" fill="${color}"/>`);
  });

  (c.bars || []).forEach((v, i) => {
    const a = edge(Math.min(v, c.zero)), b = edge(Math.max(v, c.zero));
    out.push(`<rect x="${i * c.step}" y="${a}" width="1" height="${Math.max(1, b - a)}" fill="#c0c0c0"/>`);
  });

  if (c.cloud) {
    const { a, b } = c.cloud;
    a.forEach((ya, i) => {
      const color = b[i] < ya ? "#d8bfd8" : "#f4a460", x = i * c.step + 0.5;
      out.push(`<line x1="${x}" x2="${x}" y1="${mid(Math.min(ya, b[i]))}" y2="${mid(Math.max(ya, b[i]))}" stroke="${color}" stroke-dasharray="3 3"/>`);
    });
    poly(a, "#f4a460", "3 3");
    poly(b, "#d8bfd8", "3 3");
  }
  (c.lines || []).forEach(l => poly(l.y, l.color, l.dash));
  (c.dots || []).forEach((v, i) => {
    const x = i * c.step, y = mid(v) - 0.5;
    out.push(`<path d="M${x - 1} ${y}h3v1h-3zM${x} ${y - 1}h1v3h-1z" fill="#00ff00"/><rect x="${x}" y="${y}" width="1" height="1" fill="#fff"/>`);
  });
  return out.join("");
}

document.querySelectorAll("[data-chart]").forEach(svg => {
  svg.innerHTML = draw(charts[svg.dataset.chart]);
});
```
